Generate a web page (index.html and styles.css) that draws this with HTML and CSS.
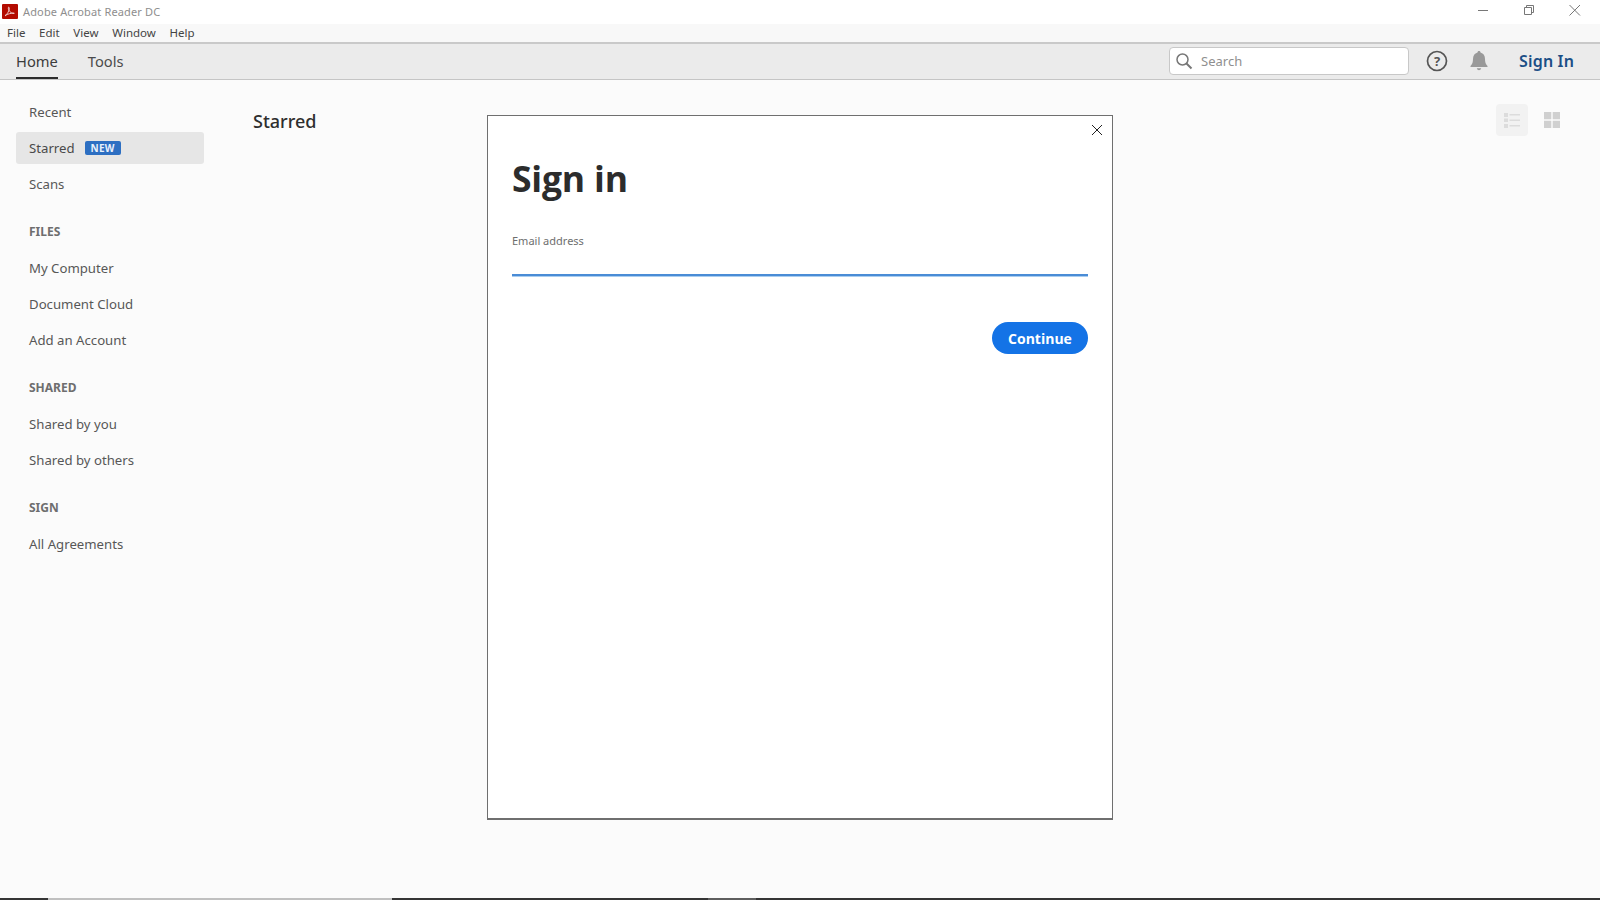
FILE: index.html
```html
<!DOCTYPE html>
<html lang="en">
<head>
<meta charset="utf-8">
<title>Adobe Acrobat Reader DC</title>
<link rel="stylesheet" href="styles.css">
</head>
<body>
<div class="app">
  <header class="titlebar">
    <div class="title-left">
      <svg class="logo" width="16" height="15" viewBox="0 0 16 15"><rect width="16" height="15" rx="1" fill="#b30b00"/><path d="M3 11.600c1.500-.8 2.700-2.400 3.800-4.900.4-.9.6-2 .3-3.300-.1-.4-.6-.4-.7 0-.3 1.400.4 3 1.500 4.200 1 1.100 2.200 1.800 4.400 1.700-1.700-.3-4.300.1-6.400.9-1.100.4-1.800 1-2.400 1.400z" fill="none" stroke="#f4dcdc" stroke-width=".9"/></svg>
      <span class="app-name">Adobe Acrobat Reader DC</span>
    </div>
    <div class="win-controls">
      <svg width="12" height="12" viewBox="0 0 12 12"><path d="M1 6.500h10" stroke="#777" fill="none"/></svg>
      <svg width="12" height="12" viewBox="0 0 12 12"><path d="M1.500 3.500h7v7h-7zM3.500 3.500v-2h7v7h-2" stroke="#777" fill="none"/></svg>
      <svg width="12" height="12" viewBox="0 0 12 12"><path d="M.5 1l10.500 10.500M11 1L.5 11.500" stroke="#777" fill="none"/></svg>
    </div>
  </header>
  <nav class="menubar">
    <span>File</span><span>Edit</span><span>View</span><span>Window</span><span>Help</span>
  </nav>
  <div class="toolbar">
    <div class="tabs">
      <span class="tab active">Home</span>
      <span class="tab">Tools</span>
    </div>
    <div class="tool-right">
      <div class="search">
        <svg width="18" height="18" viewBox="0 0 18 18"><circle cx="7.500" cy="7.500" r="5.500" fill="none" stroke="#777" stroke-width="1.500"/><path d="M11.500 11.500l5 5" stroke="#777" stroke-width="2" fill="none"/></svg>
        <span>Search</span>
      </div>
      <svg class="help" width="22" height="22" viewBox="0 0 22 22"><circle cx="11" cy="11" r="9.500" fill="none" stroke="#555" stroke-width="1.700"/><text x="11" y="15.500" text-anchor="middle" class="help-q">?</text></svg>
      <svg class="bell" width="18" height="20" viewBox="0 0 18 20"><path d="M9 0c1 0 1.500.7 1.500 1.500C13.500 2.300 15 4.800 15 8c0 3 .6 5 2.500 7v1H.5v-1C2.400 13 3 11 3 8c0-3.200 1.500-5.700 4.500-6.500C7.500.7 8 0 9 0z" fill="#999"/><path d="M6.800 17.300h4.400c-.3 1.300-1.100 2-2.200 2s-1.900-.7-2.200-2z" fill="#999"/></svg>
      <span class="signin">Sign In</span>
    </div>
  </div>
  <main class="body">
    <aside class="sidebar">
      <a class="item">Recent</a>
      <a class="item selected">Starred <b class="badge">NEW</b></a>
      <a class="item">Scans</a>
      <h3 class="group">FILES</h3>
      <a class="item">My Computer</a>
      <a class="item">Document Cloud</a>
      <a class="item">Add an Account</a>
      <h3 class="group">SHARED</h3>
      <a class="item">Shared by you</a>
      <a class="item">Shared by others</a>
      <h3 class="group">SIGN</h3>
      <a class="item">All Agreements</a>
    </aside>
    <section class="content">
      <h2 class="heading">Starred</h2>
      <div class="views">
        <span class="view view-on">
          <svg width="16" height="16" viewBox="0 0 16 16"><path d="M0 1h4v4H0zM0 6.500h4v3.500H0zM0 12h4v4H0zM5.500 2h10.500v1.500H5.500zM5.500 7.500h10.500V9H5.500zM5.500 13h10.500v1.500H5.500z" fill="#dcdcdc"/></svg>
        </span>
        <span class="view">
          <svg width="16" height="16" viewBox="0 0 16 16"><path d="M0 0h7.300v7.300H0zM8.700 0H16v7.300H8.700zM0 8.700h7.300V16H0zM8.700 8.700H16V16H8.700z" fill="#d0d0d0"/></svg>
        </span>
      </div>
    </section>
    <div class="dialog">
      <svg class="close" width="12" height="12" viewBox="0 0 12 12"><path d="M1 1l10 10M11 1L1 11" stroke="#222" stroke-width="1" fill="none"/></svg>
      <h1 class="dlg-title">Sign in</h1>
      <label class="dlg-label">Email address</label>
      <div class="dlg-input"></div>
      <div class="dlg-actions"><button class="continue">Continue</button></div>
    </div>
  </main>
  <div class="taskbar">
    <span class="tb-a"></span><span class="tb-b"></span><span class="tb-a tb-c"></span><span class="tb-d"></span><span class="tb-a tb-e"></span>
  </div>
</div>
</body>
</html>
```
FILE: styles.css
```css
* { box-sizing: border-box; }
html, body { margin: 0; height: 100%; overflow: hidden; }
body { font-family: "Noto Sans", "Open Sans", sans-serif; color: #4b4b4b; background: #fbfbfb; }
.app { width: 1600px; height: 900px; display: flex; flex-direction: column; }

.titlebar { height: 24px; background: #fff; display: flex; justify-content: space-between; align-items: center; flex: none; }
.title-left { display: flex; align-items: center; gap: 5px; padding-left: 2px; margin-top: -1px; }
.app-name { font-size: 11px; color: #8e8e8e; letter-spacing: .15px; }
.win-controls { display: flex; gap: 34px; padding-right: 19px; margin-top: -4px; }

.menubar { height: 20px; background: #f8f8f8; border-bottom: 2px solid #c9c9c9; display: flex; align-items: center; gap: 13.700px; padding-left: 7px; font-size: 11.500px; color: #444; flex: none; padding-bottom: 2px; }

.toolbar { height: 36px; background: #ebebeb; border-bottom: 1px solid #c5c5c5; display: flex; justify-content: space-between; flex: none; }
.tabs { display: flex; gap: 30px; padding-left: 16px; }
.tab { font-size: 14.700px; line-height: 34px; height: 35px; color: #4b4b4b; }
.tab.active { border-bottom: 2px solid #2c2c2c; color: #3c3c3c; }
.tool-right { display: flex; align-items: center; padding-bottom: 1px; }
.search { width: 240px; height: 28px; background: #fff; border: 1px solid #c8c8c8; border-radius: 4px; display: flex; align-items: center; gap: 8px; padding-left: 5px; font-size: 13px; color: #8f8f8f; margin-right: 17px; }
.help { margin-right: 22px; }
.help-q { font-family: "Noto Sans", sans-serif; font-size: 13px; font-weight: 700; fill: #555; }
.bell { margin-right: 31px; }
.signin { font-size: 16px; font-weight: 600; color: #1b4f86; margin-right: 26px; letter-spacing: .15px; }

.body { flex: 1; display: flex; position: relative; min-height: 0; }
.sidebar { width: 204px; flex: none; padding: 16px 0 0 16px; display: flex; flex-direction: column; }
.item { height: 32px; margin-bottom: 4px; padding-left: 13px; display: flex; align-items: center; gap: 10px; font-size: 13.200px; color: #575757; border-radius: 3px; flex: none; }
.item.selected { background: #e6e6e6; color: #4a4a4a; }
.badge { background: #2d6fc2; color: #e8f0fb; font-size: 10px; font-weight: 700; padding: 0 6px; height: 14px; line-height: 14px; border-radius: 2px; letter-spacing: .2px; }
.group { margin: 20px 0 0; height: 28px; padding-left: 13px; font-size: 12px; line-height: 16px; font-weight: 700; color: #6e6e6e; flex: none; }

.content { flex: 1; padding: 29px 0 0 49px; position: relative; }
.heading { margin: 0; font-size: 18px; font-weight: 500; color: #2e2e2e; line-height: 24px; }
.views { position: absolute; top: 24px; right: 32px; display: flex; align-items: center; gap: 8px; }
.view { width: 32px; height: 32px; display: flex; align-items: center; justify-content: center; border-radius: 4px; }
.view-on { background: #f2f2f2; }

.dialog { position: absolute; left: 487px; top: 35px; width: 626px; height: 705px; background: #fff; border: 1px solid #6f6f6f; border-bottom-width: 2px; padding: 0 24px; display: flex; flex-direction: column; }
.close { position: absolute; top: 8px; right: 9px; }
.dlg-title { margin: 41px 0 0; font-family: "Open Sans", sans-serif; font-size: 35.500px; line-height: 42px; font-weight: 700; color: #2c2c2c; letter-spacing: -.2px; }
.dlg-label { margin-top: 34px; font-size: 11px; line-height: 16px; color: #6e6e6e; }
.dlg-input { margin-top: 25px; height: 3px; background: #5a9ade; border-top: 2px solid #4a8cd6; border-bottom: 1px solid #a9cdf0; }
.dlg-actions { margin-top: 45px; display: flex; justify-content: flex-end; }
.continue { width: 96px; height: 32px; border: 0; border-radius: 16px; background: #1473e6; color: #fff; font-family: "Open Sans", sans-serif; font-size: 14px; font-weight: 700; padding: 0; }

.taskbar { height: 2px; display: flex; flex: none; background: #353535; }
.tb-a { width: 48px; background: #353535; }
.tb-b { width: 344px; background: #c0c0c0; }
.tb-c { width: 316px; }
.tb-d { width: 48px; background: #5e5e5e; }
.tb-e { flex: 1; }
```
